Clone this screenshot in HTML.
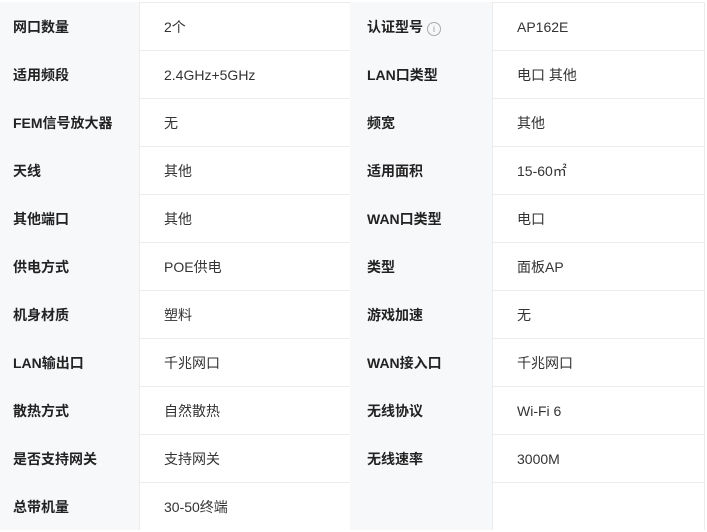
<!DOCTYPE html>
<html><head><meta charset="utf-8"><style>
body{margin:0;background:#fff;font-family:"Liberation Sans","Noto Sans CJK SC",sans-serif;font-size:14px;color:#333;}
.w{position:absolute;left:0;top:2px;width:707px;}
.r{display:flex;height:48px;}
.c{box-sizing:border-box;height:48px;line-height:50px;}
.l{background:#f7f8fa;font-weight:bold;color:#222;}
.v{border-top:1px solid #ececec;line-height:49px;}
.a{width:139px;padding-left:13px;}
.b{width:211px;padding-left:24px;border-left:1px solid #ececec;}
.d{width:142px;padding-left:17px;}
.e{width:213px;padding-left:24px;border-left:1px solid #ececec;border-right:1px solid #ececec;}
.i{display:inline-block;width:12px;height:12px;border:1px solid #aaa;border-radius:50%;color:#999;font-size:9px;line-height:12px;text-align:center;font-weight:normal;vertical-align:0px;margin-left:4px;}
</style></head><body><div class="w">
<div class="r"><div class="c l a">网口数量</div><div class="c v b">2个</div><div class="c l d">认证型号<span class="i">i</span></div><div class="c v e">AP162E</div></div>
<div class="r"><div class="c l a">适用频段</div><div class="c v b">2.4GHz+5GHz</div><div class="c l d">LAN口类型</div><div class="c v e">电口 其他</div></div>
<div class="r"><div class="c l a">FEM信号放大器</div><div class="c v b">无</div><div class="c l d">频宽</div><div class="c v e">其他</div></div>
<div class="r"><div class="c l a">天线</div><div class="c v b">其他</div><div class="c l d">适用面积</div><div class="c v e">15-60㎡</div></div>
<div class="r"><div class="c l a">其他端口</div><div class="c v b">其他</div><div class="c l d">WAN口类型</div><div class="c v e">电口</div></div>
<div class="r"><div class="c l a">供电方式</div><div class="c v b">POE供电</div><div class="c l d">类型</div><div class="c v e">面板AP</div></div>
<div class="r"><div class="c l a">机身材质</div><div class="c v b">塑料</div><div class="c l d">游戏加速</div><div class="c v e">无</div></div>
<div class="r"><div class="c l a">LAN输出口</div><div class="c v b">千兆网口</div><div class="c l d">WAN接入口</div><div class="c v e">千兆网口</div></div>
<div class="r"><div class="c l a">散热方式</div><div class="c v b">自然散热</div><div class="c l d">无线协议</div><div class="c v e">Wi-Fi 6</div></div>
<div class="r"><div class="c l a">是否支持网关</div><div class="c v b">支持网关</div><div class="c l d">无线速率</div><div class="c v e">3000M</div></div>
<div class="r"><div class="c l a">总带机量</div><div class="c v b">30-50终端</div><div class="c l d"></div><div class="c v e"></div></div>
</div></body></html>
